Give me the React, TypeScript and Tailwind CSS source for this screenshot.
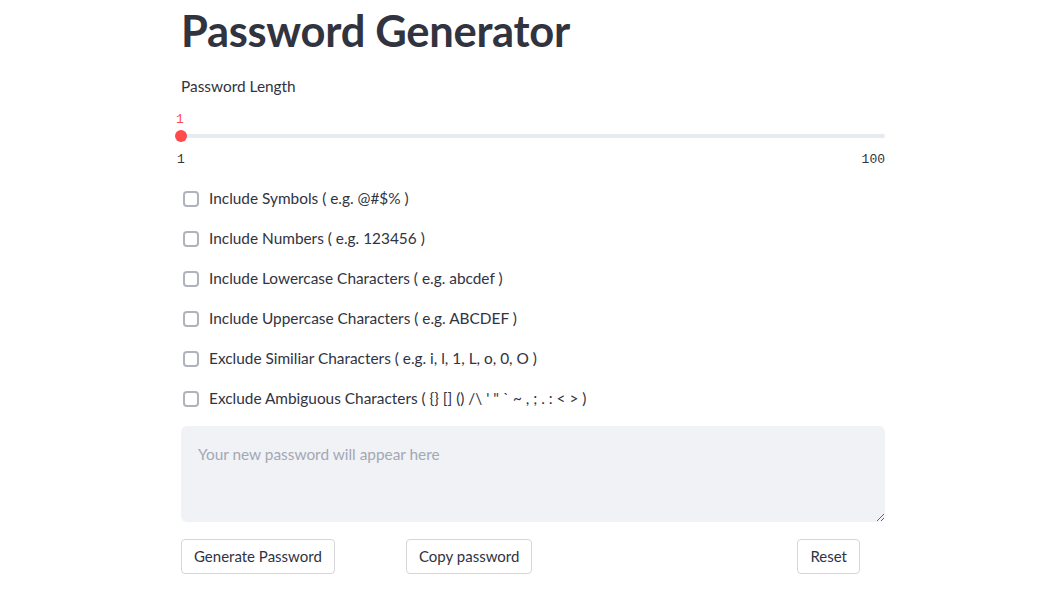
import { useState } from "react";

const options = [
  "Include Symbols ( e.g. @#$% )",
  "Include Numbers ( e.g. 123456 )",
  "Include Lowercase Characters ( e.g. abcdef )",
  "Include Uppercase Characters ( e.g. ABCDEF )",
  "Exclude Similiar Characters ( e.g. i, l, 1, L, o, 0, O )",
  "Exclude Ambiguous Characters ( {} [] () /\\ ' \" ` ~ , ; . : < > )",
];

export default function App() {
  const [checked, setChecked] = useState<boolean[]>(options.map(() => false));

  return (
    <div className="min-h-screen bg-white text-[#31333f] font-['Lato','Noto_Sans',sans-serif]">
      <div className="w-[704px] ml-[181px]">
        <h1 className="text-[43.5px] font-bold leading-none pt-[9px] tracking-[-0.3px]">Password Generator</h1>

        <div className="mt-[24px] text-[15.4px] leading-[18px]">Password Length</div>

        {/* slider */}
        <div className="relative mt-[18px] h-[50px] font-['Liberation_Mono',monospace]">
          <div className="absolute left-[-5px] top-[0px] text-[13px] text-[#ff4b4b] leading-[14px]">1</div>
          <div className="absolute left-0 right-0 top-[21px] h-[4px] rounded-full bg-[#e6eaf1]" />
          <div className="absolute left-[-6px] top-[17px] h-[12px] w-[12px] rounded-full bg-[#ff4b4b]" />
          <div className="absolute left-[-4px] top-[40px] text-[13px] leading-[14px]">1</div>
          <div className="absolute right-0 top-[40px] text-[13px] leading-[14px]">100</div>
        </div>

        <div className="mt-[24px] flex flex-col gap-[16px]">
          {options.map((label, i) => (
            <label key={label} className="flex items-center h-[24px] cursor-pointer">
              <input
                type="checkbox"
                checked={checked[i]}
                onChange={() => setChecked(checked.map((c, j) => (j === i ? !c : c)))}
                className="appearance-none ml-[2px] h-[16px] w-[16px] rounded-[4px] border-2 border-[#b0b3bb] bg-white"
              />
              <span className="ml-[10px] text-[15.4px]">{label}</span>
            </label>
          ))}
        </div>

        <textarea
          placeholder="Your new password will appear here"
          className="mt-[15px] block w-full h-[96px] rounded-[6px] bg-[#f0f2f6] px-[17px] py-[17px] text-[15.4px] placeholder:text-[#a3a8b4] outline-none resize-y"
        />

        <div className="mt-[17px] flex items-center">
          <div className="w-[225px]">
            <button className="h-[35px] px-[12px] rounded-[4px] border border-[#d6d6d9] bg-white text-[15px]">Generate Password</button>
          </div>
          <div className="flex-1">
            <button className="h-[35px] px-[12px] rounded-[4px] border border-[#d6d6d9] bg-white text-[15px]">Copy password</button>
          </div>
          <button className="mr-[25px] h-[35px] px-[12px] rounded-[4px] border border-[#d6d6d9] bg-white text-[15px]">Reset</button>
        </div>
      </div>
    </div>
  );
}
